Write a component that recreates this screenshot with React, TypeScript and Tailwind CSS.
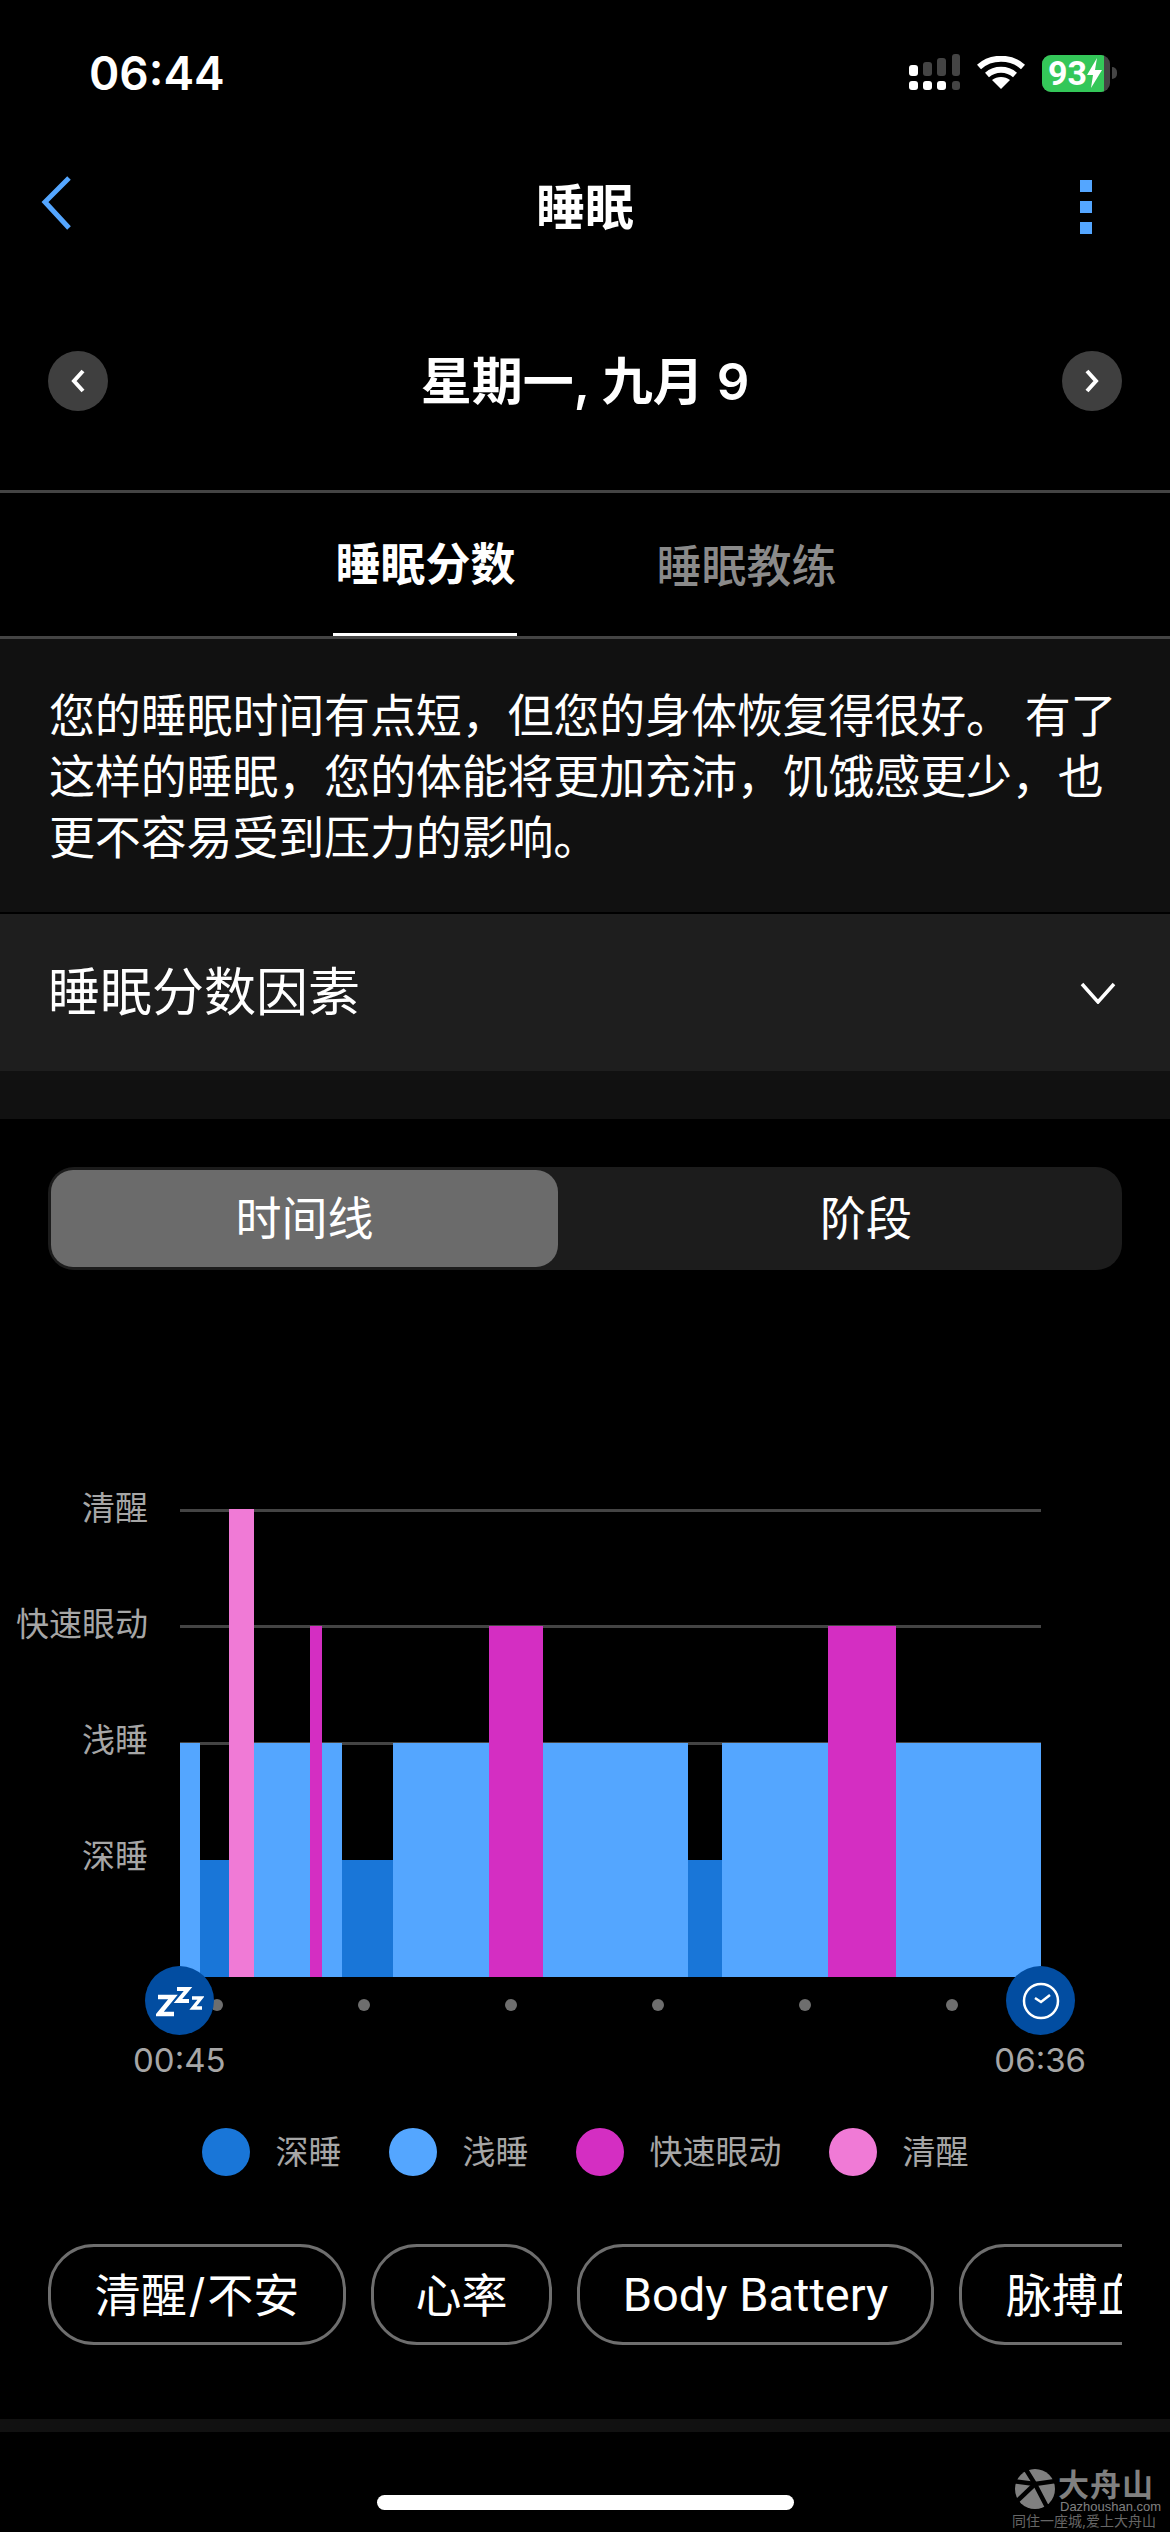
const SANS = "font-['Inter','Noto_Sans_CJK_SC',sans-serif]";

const stages = [
  { w: 20, c: "#54a6ff", top: 1743 },
  { w: 29, c: "#1976d8", top: 1860 },
  { w: 25, c: "#f07ad6", top: 1509 },
  { w: 56, c: "#54a6ff", top: 1743 },
  { w: 12, c: "#d42ec2", top: 1626 },
  { w: 20, c: "#54a6ff", top: 1743 },
  { w: 51, c: "#1976d8", top: 1860 },
  { w: 96, c: "#54a6ff", top: 1743 },
  { w: 54, c: "#d42ec2", top: 1626 },
  { w: 145, c: "#54a6ff", top: 1743 },
  { w: 34, c: "#1976d8", top: 1860 },
  { w: 106, c: "#54a6ff", top: 1743 },
  { w: 68, c: "#d42ec2", top: 1626 },
  { w: 145, c: "#54a6ff", top: 1743 },
];

const legend = [
  { c: "bg-[#1976d8]", t: "深睡" },
  { c: "bg-[#54a6ff]", t: "浅睡" },
  { c: "bg-[#d42ec2]", t: "快速眼动" },
  { c: "bg-[#f07ad6]", t: "清醒" },
];

function StatusBar() {
  return (
    <div className="h-[146px] flex items-center justify-between pl-[89px] pr-[53px]">
      <span className="text-[46px] font-semibold text-white leading-none">06:44</span>
      <div className="flex items-center">
        <svg width="52" height="38" viewBox="0 0 52 38" fill="#fff">
          <rect x="0" y="11" width="9" height="11" rx="3" />
          <rect x="14" y="8" width="9" height="14" rx="3" fill="#444" />
          <rect x="28" y="4" width="9" height="18" rx="3" fill="#444" />
          <rect x="43" y="0" width="8" height="22" rx="3" fill="#444" />
          <rect x="0" y="27" width="9" height="9" rx="3" />
          <rect x="14" y="27" width="9" height="9" rx="3" />
          <rect x="28" y="27" width="9" height="9" rx="3" />
          <rect x="43" y="27" width="8" height="9" rx="3" fill="#444" />
        </svg>
        <svg className="ml-[16px]" width="48" height="34" viewBox="0 0 48 34" fill="none" stroke="#fff" strokeWidth="6">
          <path d="M2 11 C14 0 34 0 46 11" />
          <path d="M10 19 C18 12 30 12 38 19" />
          <path d="M24 33 L15 24 C20 20 28 20 33 24 Z" fill="#fff" stroke="none" />
        </svg>
        <div className="ml-[17px] w-[68px] h-[37px] rounded-[9px] overflow-hidden bg-[#444] flex">
          <div className="w-[62px] bg-[#34c759] flex items-center pl-[6px] text-white text-[34px] font-bold leading-none font-['Roboto',sans-serif]">
            93
            <svg width="15" height="30" viewBox="0 0 15 30" fill="#fff" className="shrink-0">
              <path d="M10 0 L0 17 H6 L4 30 L15 12 H8 Z" />
            </svg>
          </div>
        </div>
        <div className="w-[5px] h-[12px] bg-[#444] rounded-r-full ml-[2px]" />
      </div>
    </div>
  );
}

function NavBar() {
  return (
    <div className="h-[122px] grid grid-cols-[1fr_auto_1fr] items-center px-[41px]">
      <svg className="mb-[8px]" width="30" height="54" viewBox="0 0 30 54" fill="none" stroke="#54a6ff" strokeWidth="5">
        <path d="M28 2 L4 26 L28 52" />
      </svg>
      <h1 className="text-[49px] font-bold text-white leading-none">睡眠</h1>
      <div className="flex flex-col gap-[9px] justify-self-end mr-[37px]">
        <div className="w-[12px] h-[12px] bg-[#54a6ff]" />
        <div className="w-[12px] h-[12px] bg-[#54a6ff]" />
        <div className="w-[12px] h-[12px] bg-[#54a6ff]" />
      </div>
    </div>
  );
}

function DateRow() {
  return (
    <div className="pt-[83px] pb-[79px] px-[48px] flex items-center justify-between border-b-[3px] border-[#444] box-content h-[60px]">
      <div className="w-[60px] h-[60px] rounded-full bg-[#3f3f3f] flex items-center justify-center">
        <svg width="16" height="26" viewBox="0 0 16 26" fill="none" stroke="#fff" strokeWidth="4">
          <path d="M13 3 L4 13 L13 23" />
        </svg>
      </div>
      <span className="text-[51px] font-semibold text-white leading-none">星期一, 九月 9</span>
      <div className="w-[60px] h-[60px] rounded-full bg-[#3f3f3f] flex items-center justify-center">
        <svg width="16" height="26" viewBox="0 0 16 26" fill="none" stroke="#fff" strokeWidth="4">
          <path d="M3 3 L12 13 L3 23" />
        </svg>
      </div>
    </div>
  );
}

function Tabs() {
  return (
    <div className="h-[146px] border-b-[3px] border-[#444] flex justify-center gap-[139px]">
      <div className="w-[184px] h-[143px] flex justify-center items-center pt-[3px] border-b-[3px] border-white">
        <span className="text-[45px] font-bold text-white leading-none">睡眠分数</span>
      </div>
      <div className="h-[143px] flex items-center pt-[3px]">
        <span className="text-[45px] font-medium text-[#8a8a8a] leading-none">睡眠教练</span>
      </div>
    </div>
  );
}

function Summary() {
  return (
    <div className="bg-[#111] h-[273px] pt-[46px] px-[49px] text-[46px] leading-[61px] text-white tracking-[-0.15px]">
      您的睡眠时间有点短，但您的身体恢复得很好。 有了这样的睡眠，您的体能将更加充沛，饥饿感更少，也更不容易受到压力的影响。
    </div>
  );
}

function Factors() {
  return (
    <>
      <div className="h-[159px] bg-[#1e1e1e] border-t-2 border-black flex items-center justify-between pl-[48px] pr-[54px]">
        <span className="text-[52px] text-white leading-none">睡眠分数因素</span>
        <svg width="36" height="22" viewBox="0 0 36 22" fill="none" stroke="#fff" strokeWidth="3.5">
          <path d="M2 2 L18 20 L34 2" />
        </svg>
      </div>
      <div className="h-[48px] bg-[#111]" />
    </>
  );
}

function Segmented() {
  return (
    <div className="mt-[48px] mx-[48px] h-[103px] rounded-[26px] bg-[#1c1c1c] p-[3px] flex">
      <div className="w-[507px] rounded-[22px] bg-[#6b6b6b] flex items-center justify-center text-[46px] text-white">
        时间线
      </div>
      <div className="flex-1 flex items-center justify-center pl-[55px] text-[46px] text-white">阶段</div>
    </div>
  );
}

function Chart() {
  const base = 1977;
  let x = 0;
  return (
    <div className="relative mt-[239px] h-[468px] w-full">
      <svg className="absolute left-[180px] top-0" width="861" height="468" viewBox="0 0 861 468" shapeRendering="crispEdges">
        <rect x="0" y="0" width="861" height="3" fill="#444" />
        <rect x="0" y="116" width="861" height="3" fill="#444" />
        <rect x="0" y="233" width="861" height="3" fill="#444" />
        {stages.map((s) => {
          const r = <rect key={x} x={x} y={s.top - 1509} width={s.w} height={base - s.top} fill={s.c} />;
          x += s.w;
          return r;
        })}
      </svg>
      <div className="absolute left-0 top-[-24px] w-[148px] flex flex-col items-end gap-[69px] text-[33px] leading-[47px] text-[#a6a6a6]">
        <span>清醒</span>
        <span>快速眼动</span>
        <span>浅睡</span>
        <span>深睡</span>
      </div>
      <div className="absolute left-[145px] top-[457px] w-[69px] h-[69px] rounded-full bg-[#024da1] flex items-center justify-center">
        <svg width="48" height="34" viewBox="0 0 48 34" fill="none" stroke="#fff" strokeWidth="4.5">
          <path d="M2 13 H17 L3 30 H18" />
          <path d="M21 5 H32 L22 17 H33" strokeWidth="4" />
          <path d="M36 14 H45 L37 24 H46" strokeWidth="3.5" />
        </svg>
      </div>
      <div className="absolute left-[1006px] top-[457px] w-[69px] h-[69px] rounded-full bg-[#024da1] flex items-center justify-center">
        <svg width="38" height="38" viewBox="0 0 38 38" fill="none" stroke="#fff" strokeWidth="2.5">
          <circle cx="19" cy="19" r="17" />
          <path d="M13 16 L19 20 L28 13" />
        </svg>
      </div>
    </div>
  );
}

function Axis() {
  return (
    <>
      <div className="mt-[22px] h-[12px] ml-[211px] w-[747px] flex justify-between">
        {[0, 1, 2, 3, 4, 5].map((i) => (
          <div key={i} className="w-[12px] h-[12px] rounded-full bg-[#6e6e6e]" />
        ))}
      </div>
      <div className="mt-[26px] flex justify-between pl-[133px] pr-[84px] text-[33px] leading-[46px] text-[#a6a6a6]">
        <span>00:45</span>
        <span>06:36</span>
      </div>
    </>
  );
}

function Legend() {
  return (
    <div className="mt-[45px] h-[48px] flex justify-center gap-[47px]">
      {legend.map((l) => (
        <div key={l.t} className="flex items-center gap-[26px]">
          <div className={`w-[48px] h-[48px] rounded-full ${l.c}`} />
          <span className="text-[33px] text-[#a6a6a6] leading-none">{l.t}</span>
        </div>
      ))}
    </div>
  );
}

function Pills() {
  const base = "shrink-0 h-[101px] rounded-[46px] border-[3px] border-[#6e6e6e] flex items-center text-[46px] text-white leading-none";
  return (
    <div className="mt-[68px] mx-[48px] flex gap-[25px] overflow-hidden whitespace-nowrap">
      <div className={`${base} w-[298px] justify-center`}>
        清醒<span className="mx-[2px]">/</span>不安
      </div>
      <div className={`${base} w-[181px] justify-center`}>心率</div>
      <div className={`${base} w-[357px] justify-center text-[47px] font-['Roboto','Noto_Sans_CJK_SC',sans-serif]`}>Body Battery</div>
      <div className={`${base} pl-[44px] pr-[40px]`}>脉搏血氧</div>
    </div>
  );
}

function Watermark() {
  return (
    <div className="absolute left-[1012px] top-[2468px] w-[142px] h-[62px] text-[#808080]">
      <div className="flex items-start">
        <svg width="44" height="42" viewBox="0 0 44 42" fill="none">
          <circle cx="23" cy="21" r="20" fill="#808080" />
          <g stroke="#000" strokeWidth="4.5">
            <path d="M13 0 L23 16 L36 41" />
            <path d="M0 13 L23 16 L44 13" />
            <path d="M23 16 L4 34" />
          </g>
        </svg>
        <span className="ml-[2px] text-[31px] font-bold leading-[33px] tracking-[1px]">大舟山</span>
      </div>
      <span className="absolute left-[48px] top-[32px] text-[13px] leading-[13px] font-['Liberation_Sans',sans-serif]">Dazhoushan.com</span>
      <span className="absolute left-0 top-[46px] text-[14px] leading-[14px] text-[#666] whitespace-nowrap">同住一座城,爱上大舟山</span>
    </div>
  );
}

export default function App() {
  return (
    <div className={`${SANS} relative w-[1170px] h-[2532px] bg-black overflow-hidden`}>
      <StatusBar />
      <NavBar />
      <DateRow />
      <Tabs />
      <Summary />
      <Factors />
      <Segmented />
      <Chart />
      <Axis />
      <Legend />
      <Pills />
      <div className="mt-[74px] h-[13px] bg-[#111]" />
      <div className="mt-[63px] mx-auto w-[417px] h-[15px] rounded-full bg-white" />
      <Watermark />
    </div>
  );
}
